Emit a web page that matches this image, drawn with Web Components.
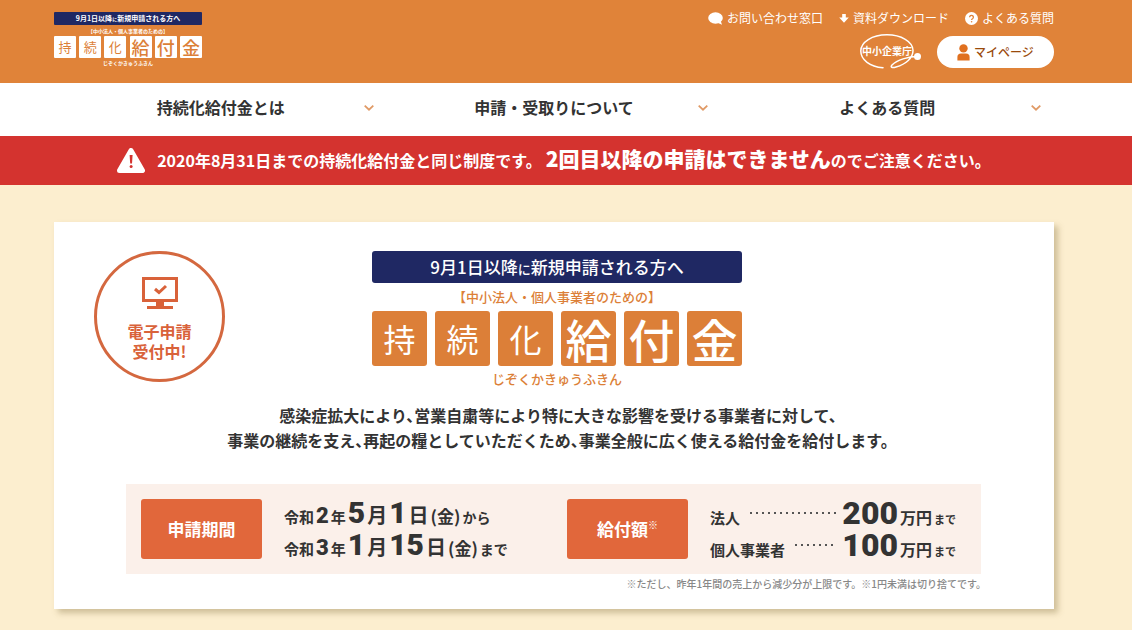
<!DOCTYPE html>
<html lang="ja">
<head>
<meta charset="utf-8">
<meta name="viewport" content="width=device-width, initial-scale=1">
<title>持続化給付金</title>
<style>
  body {
    margin: 0;
    min-height: 100vh;
    background-color: #fceecf;
    color: #333;
    font-family: "Noto Sans CJK JP", "Noto Sans", sans-serif;
    --orange: #e08339;
    --vermilion: #e1673b;
  }
</style>
</head>
<body>
<site-header></site-header>
<site-nav>
  <nav-item>持続化給付金とは</nav-item>
  <nav-item>申請・受取りについて</nav-item>
  <nav-item>よくある質問</nav-item>
</site-nav>
<alert-bar>2020年8月31日までの持続化給付金と同じ制度です。<strong slot="main">2回目以降の申請はできません</strong><span slot="end">のでご注意ください。</span></alert-bar>
<main>
  <hero-card>
    <online-badge slot="badge"></online-badge>
    <program-title slot="title"></program-title>
    <span slot="lead">感染症拡大により、営業自粛等により特に大きな影響を受ける事業者に対して、<br>事業の継続を支え、再起の糧としていただくため、事業全般に広く使える給付金を給付します。</span>
    <grant-info slot="info"></grant-info>
    <span slot="note">※ただし、昨年1年間の売上から減少分が上限です。※1円未満は切り捨てです。</span>
  </hero-card>
</main>

<script>
class ProgramTitle extends HTMLElement{
  constructor(){
    super();
    this.attachShadow({mode : 'open'});
  }

  connectedCallback(){
    this.shadowRoot.innerHTML = `
    <style>
    * {
      padding: 0;
      margin: 0;
      box-sizing: border-box;
    }
    :host {
      display: block;
      width: 370px;
      text-align: center;
      --bar: 32px;
      --bar-text: 17px;
      --bar-small: 13px;
      --sub: 13px;
      --sub-line: 28px;
      --tile: 55px;
      --small: 32px;
      --large: 46px;
      --ruby-line: 25px;
      --radius: 3px;
      --ink: #dc7f38;
      --tile-bg: #dc7f38;
      --tile-ink: #fff;
    }
    :host([compact]) {
      width: 148px;
      --bar: 13px;
      --bar-text: 7px;
      --bar-small: 5px;
      --sub: 5px;
      --sub-line: 11px;
      --tile: 22px;
      --small: 13px;
      --large: 18px;
      --ruby-line: 10px;
      --radius: 1px;
      --ink: #fff;
      --tile-bg: #fff;
      --tile-ink: #dc7f38;
    }
    .bar {
      height: var(--bar);
      background-color: #1f2863;
      color: #fff;
      border-radius: var(--radius);
      font-size: var(--bar-text);
      font-weight: 500;
      line-height: var(--bar);
    }
    .bar small {
      font-size: var(--bar-small);
      line-height: 1;
    }
    .sub, .ruby {
      color: var(--ink);
      font-size: var(--sub);
      font-weight: 500;
      line-height: var(--sub-line);
    }
    .ruby {
      line-height: var(--ruby-line);
    }
    :host([compact]) p {
      font-weight: 700;
    }
    h1 {
      display: flex;
      justify-content: space-between;
      font-weight: 400;
    }
    h1 span {
      width: var(--tile);
      height: var(--tile);
      line-height: var(--tile);
      border-radius: var(--radius);
      background-color: var(--tile-bg);
      color: var(--tile-ink);
      font-size: var(--small);
    }
    h1 .large {
      font-size: var(--large);
      font-weight: 500;
    }
    </style>
    <p class='bar'>9月1日以降<small>に</small>新規申請される方へ</p>
    <p class='sub'>【中小法人・個人事業者のための】</p>
    <h1>
      <span>持</span><span>続</span><span>化</span>
      <span class='large'>給</span><span class='large'>付</span><span class='large'>金</span>
    </h1>
    <p class='ruby'>じぞくかきゅうふきん</p>`
  }
}

class SiteHeader extends HTMLElement{
  constructor(){
    super();
    this.attachShadow({mode : 'open'});
  }

  connectedCallback(){
    this.shadowRoot.innerHTML = `
    <style>
    * {
      padding: 0;
      margin: 0;
      box-sizing: border-box;
    }
    :host {
      display: block;
      padding-right: 24px;
      background-color: var(--orange);
    }
    header {
      display: flex;
      justify-content: space-between;
      max-width: 1000px;
      height: 83px;
      margin: 0 auto;
    }
    .side {
      display: flex;
      flex-direction: column;
      align-items: flex-end;
      padding-top: 8px;
      gap: 8px;
    }
    ul {
      display: flex;
      gap: 16px;
      list-style: none;
    }
    a {
      display: flex;
      align-items: center;
      color: #fff;
      font-size: 12px;
      line-height: 20px;
      text-decoration: none;
    }
    ul a {
      gap: 4px;
    }
    .brand {
      align-items: flex-start;
      padding-top: 12px;
    }
    .tools {
      display: flex;
      gap: 16px;
    }
    .tools .agency {
      align-items: flex-start;
      margin-top: -2px;
    }
    .mypage {
      justify-content: center;
      gap: 4px;
      width: 117px;
      height: 32px;
      border-radius: 16px;
      background-color: #fff;
      color: #9a4a0c;
      font-weight: 500;
    }
    </style>
    <header>
      <a class='brand' href='#'><program-title compact></program-title></a>
      <div class='side'>
        <ul>
          <li><a href='#'>
            <svg width='15' height='13' viewBox='0 0 15 13' fill='#fff'><ellipse cx='7.5' cy='6' rx='7.3' ry='5.8'/><path d='M9 10.5 L14 12.8 L12.6 8.5 Z'/></svg>
            お問い合わせ窓口</a></li>
          <li><a href='#'>
            <svg width='10' height='10' viewBox='0 0 10 10' fill='#fff'><path d='M3.2 1 h3.6 v3.4 H9.8 L5 9.8 L.2 4.4 H3.2 Z'/></svg>
            資料ダウンロード</a></li>
          <li><a href='#'>
            <svg width='13' height='13' viewBox='0 0 13 13'><circle cx='6.5' cy='6.5' r='6.5' fill='#fff'/><path d='M4.6 5.2 a1.9 1.8 0 1 1 2.9 1.5 q-.9 .5 -.9 1.2' fill='none' stroke='#e08339' stroke-width='1.3'/><circle cx='6.6' cy='9.7' r='.8' fill='#e08339'/></svg>
            よくある質問</a></li>
        </ul>
        <div class='tools'>
          <a class='agency' href='#'>
            <svg width='61' height='35' viewBox='0 0 61 35'>
              <path d='M23 33.8 C10 32.5 .8 26 .8 17 C.8 8 12 .8 27 .8 C41 .8 53 7.5 53 16.5 C53 24 46 30 36 33 C32 34.3 30 33 32 31 C37 26 48 22.5 58 22.5' fill='none' stroke='#fff' stroke-width='1.5' stroke-linecap='round'/>
              <circle cx='57.5' cy='22.5' r='3.5' fill='#fff'/>
              <text x='27' y='20.5' text-anchor='middle' font-size='10' font-weight='700' fill='#fff'>中小企業庁</text>
            </svg>
          </a>
          <a class='mypage' href='#'>
            <svg width='13' height='17' viewBox='0 0 13 17' fill='#e0701f'><circle cx='6.5' cy='4.4' r='4.2'/><path d='M.4 16.5 V13 Q.4 9.4 4 9.4 H9 Q12.6 9.4 12.6 13 V16.5 Z'/></svg>
            マイページ</a>
        </div>
      </div>
    </header>`
  }
}

class SiteNav extends HTMLElement{
  constructor(){
    super();
    this.attachShadow({mode : 'open'});
  }

  connectedCallback(){
    this.shadowRoot.innerHTML = `
    <style>
    :host {
      display: block;
      padding-right: 24px;
      background-color: #fff;
    }
    nav {
      display: grid;
      grid-template-columns: repeat(3, 1fr);
      max-width: 1000px;
      margin: 0 auto;
    }
    </style>
    <nav><slot></slot></nav>`
  }
}

class NavItem extends HTMLElement{
  constructor(){
    super();
    this.attachShadow({mode : 'open'});
  }

  connectedCallback(){
    this.shadowRoot.innerHTML = `
    <style>
    :host {
      display: block;
    }
    button {
      display: grid;
      grid-template-columns: 24px 1fr 24px;
      align-items: center;
      width: 100%;
      height: 53px;
      padding: 0 0 3px;
      border: 0;
      background: none;
      color: #333;
      font-family: inherit;
      font-size: 16px;
      font-weight: 700;
      line-height: 24px;
      cursor: pointer;
    }
    span {
      grid-column: 2;
      padding-bottom: 2px;
    }
    </style>
    <button type='button' aria-haspopup='true'>
      <span><slot></slot></span>
      <svg width='12' height='6' viewBox='0 0 12 6' fill='none' stroke='#e09a66' stroke-width='1.8'><path d='M1.7 .7 L6 4.7 L10.3 .7'/></svg>
    </button>`
  }
}

class AlertBar extends HTMLElement{
  constructor(){
    super();
    this.attachShadow({mode : 'open'});
  }

  connectedCallback(){
    this.shadowRoot.innerHTML = `
    <style>
    :host {
      display: block;
      padding-right: 24px;
      background-color: #d4332f;
      color: #fff;
      font-size: 16px;
      font-weight: 700;
    }
    div {
      display: flex;
      justify-content: center;
      align-items: center;
      gap: 12px;
      min-height: 49px;
    }
    p {
      margin: 0;
      padding-bottom: 4px;
      line-height: 32px;
    }
    ::slotted(strong) {
      margin-left: 4px;
      font-size: 21px;
    }
    </style>
    <div role='alert'>
      <svg width='28' height='25' viewBox='0 0 28 25'><path d='M14 2.5 L25.5 22.5 H2.5 Z' fill='#fff' stroke='#fff' stroke-width='5' stroke-linejoin='round'/><path d='M12.6 7 h3 l-.6 8.5 h-1.8 Z' fill='#d4332f'/><circle cx='14.1' cy='18.6' r='1.5' fill='#d4332f'/></svg>
      <p><slot></slot><slot name='main'></slot><slot name='end'></slot></p>
    </div>`
  }
}

class OnlineBadge extends HTMLElement{
  constructor(){
    super();
    this.attachShadow({mode : 'open'});
  }

  connectedCallback(){
    this.shadowRoot.innerHTML = `
    <style>
    :host {
      display: flex;
      flex-direction: column;
      align-items: center;
      box-sizing: border-box;
      width: 131px;
      height: 131px;
      padding-top: 23px;
      border: 3px solid #d4683f;
      border-radius: 50%;
      color: #d9623a;
    }
    p {
      margin: 12px 0 0;
      font-size: 16px;
      font-weight: 700;
      line-height: 20px;
      text-align: center;
    }
    </style>
    <svg width='36' height='32' viewBox='0 0 36 32'>
      <rect x='1.5' y='1.5' width='33' height='22' fill='none' stroke='#d9623a' stroke-width='3'/>
      <path d='M13 12 L17 15.5 L24 9' fill='none' stroke='#d9623a' stroke-width='3'/>
      <path d='M14 24 h8 v5 h9 v3 H5 v-3 h9 Z' fill='#d9623a'/>
    </svg>
    <p>電子申請<br>受付中!</p>`
  }
}

class GrantInfo extends HTMLElement{
  constructor(){
    super();
    this.attachShadow({mode : 'open'});
  }

  connectedCallback(){
    this.shadowRoot.innerHTML = `
    <style>
    * {
      padding: 0;
      margin: 0;
      box-sizing: border-box;
    }
    :host {
      display: grid;
      grid-template-columns: 121px 1fr 121px 246px;
      align-items: center;
      column-gap: 22px;
      padding: 13px 25px 13px 15px;
      background-color: #fbf0ea;
      font-weight: 700;
    }
    h2 {
      border-radius: 3px;
      background-color: var(--vermilion);
      color: #fff;
      font-size: 17px;
      line-height: 60px;
      text-align: center;
    }
    h2 sup {
      font-size: 10px;
      font-weight: 400;
      line-height: 10px;
    }
    .row {
      display: flex;
      align-items: baseline;
      gap: 2px;
      height: 32px;
      font-size: 15px;
      line-height: 24px;
      white-space: nowrap;
    }
    b {
      font-family: Roboto, sans-serif;
      font-size: 22px;
      line-height: 32px;
    }
    b.date {
      font-size: 30px;
    }
    b.amount {
      font-size: 32px;
    }
    .unit {
      font-size: 20px;
    }
    .day {
      font-size: 17px;
    }
    .yen {
      font-size: 16px;
    }
    .until {
      font-size: 11px;
    }
    .from {
      font-size: 14px;
    }
    .dots {
      flex: 1;
      align-self: center;
      height: 2px;
      margin: 0 4px 0 8px;
      background: repeating-linear-gradient(90deg, #555 0 2px, transparent 2px 6px);
    }
    </style>
    <h2>申請期間</h2>
    <div>
      <p class='row'><span>令和</span><b>2</b><span>年</span> <b class='date'>5</b><span class='unit'>月</span><b class='date'>1</b><span class='unit'>日</span><span class='day'>(金)</span><span class='from'>から</span></p>
      <p class='row'><span>令和</span><b>3</b><span>年</span> <b class='date'>1</b><span class='unit'>月</span><b class='date'>15</b><span class='unit'>日</span><span class='day'>(金)</span><span class='from'>まで</span></p>
    </div>
    <h2>給付額<sup>※</sup></h2>
    <div>
      <p class='row'><span>法人</span><i class='dots'></i><b class='amount'>200</b><span class='yen'>万円</span><span class='until'>まで</span></p>
      <p class='row'><span>個人事業者</span><i class='dots'></i><b class='amount'>100</b><span class='yen'>万円</span><span class='until'>まで</span></p>
    </div>`
  }
}

class HeroCard extends HTMLElement{
  constructor(){
    super();
    this.attachShadow({mode : 'open'});
  }

  connectedCallback(){
    this.shadowRoot.innerHTML = `
    <style>
    * {
      padding: 0;
      margin: 0;
      box-sizing: border-box;
    }
    :host {
      display: block;
      padding: 37px 24px 21px 0;
    }
    section {
      max-width: 1000px;
      margin: 0 auto;
      padding: 29px 0 15px;
      background-color: #fff;
      box-shadow: 4px 4px 6px rgba(120, 100, 50, 0.35);
    }
    .top {
      display: grid;
      grid-template-columns: 131px 1fr 131px;
      justify-items: center;
      padding: 0 34px 0 40px;
    }
    .lead {
      margin-top: 12px;
      padding-left: 8px;
      font-size: 16px;
      font-weight: 700;
      font-feature-settings: "halt";
      line-height: 25px;
      text-align: center;
    }
    .info {
      margin: 31px 73px 0 72px;
    }
    .note {
      margin: 0 68px 0 72px;
      color: #888;
      font-size: 10px;
      font-weight: 500;
      line-height: 20px;
      text-align: right;
    }
    </style>
    <section>
      <div class='top'>
        <slot name='badge'></slot>
        <slot name='title'></slot>
      </div>
      <p class='lead'><slot name='lead'></slot></p>
      <div class='info'><slot name='info'></slot></div>
      <p class='note'><slot name='note'></slot></p>
    </section>`
  }
}

customElements.define('program-title', ProgramTitle);
customElements.define('site-header', SiteHeader);
customElements.define('site-nav', SiteNav);
customElements.define('nav-item', NavItem);
customElements.define('alert-bar', AlertBar);
customElements.define('online-badge', OnlineBadge);
customElements.define('grant-info', GrantInfo);
customElements.define('hero-card', HeroCard);
</script>
</body>
</html>
